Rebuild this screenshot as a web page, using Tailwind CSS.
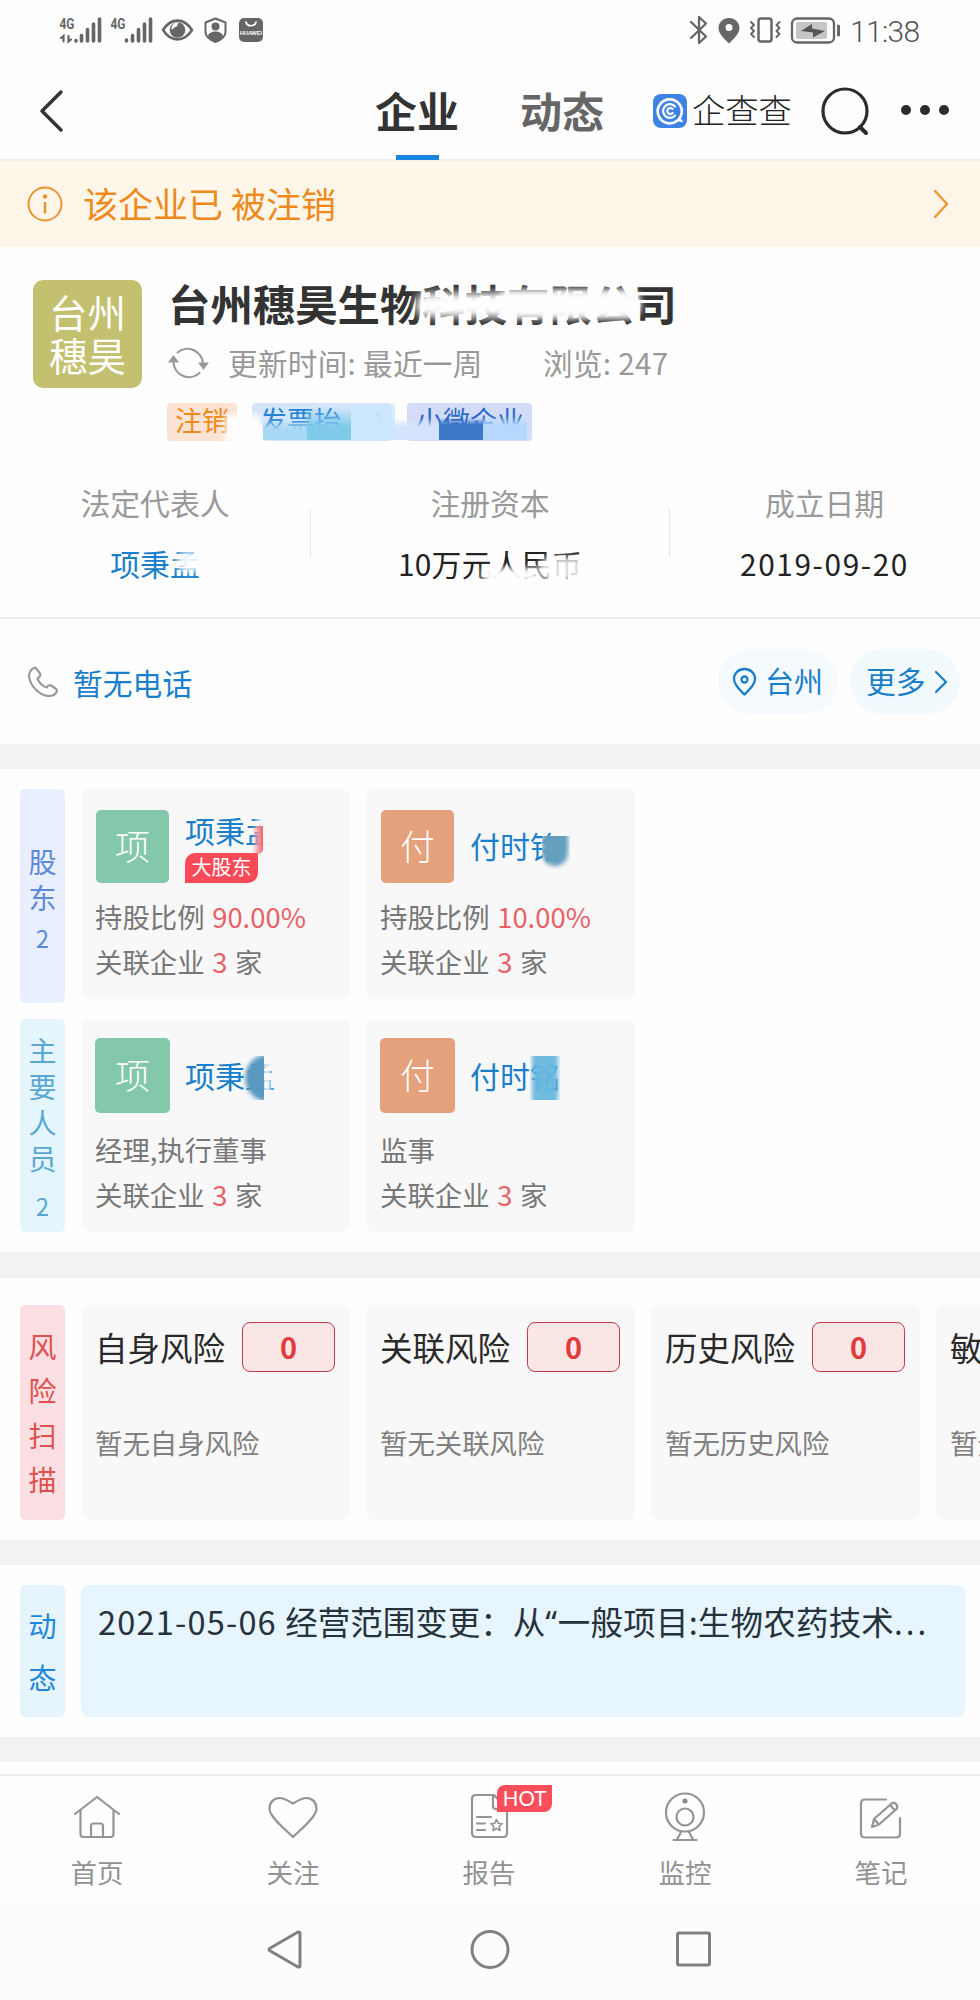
<!DOCTYPE html>
<html lang="zh-CN">
<head>
  <meta charset="UTF-8">
  <meta name="viewport" content="width=device-width, initial-scale=1.0">
  <title>企业详情</title>
  <script src="https://cdn.jsdelivr.net/npm/@tailwindcss/browser@4"></script>
</head>
<body class="bg-[#fefefe] font-['Noto_Sans_CJK_SC',sans-serif] text-[#333]">
  <div class="w-[980px] h-[2000px] overflow-hidden flex flex-col">

    <!-- 状态栏 -->
    <div class="h-[60px] shrink-0 flex items-center justify-between pl-[59px] pr-[59px] text-[#666]">
      <svg width="206" height="30" viewBox="59 15 206 30" fill="none" stroke="#666" stroke-linecap="round">
        <g font-family="Roboto, sans-serif" font-size="15" font-weight="700" fill="#666" stroke="none">
          <text x="59.5" y="28.5" textLength="15" lengthAdjust="spacingAndGlyphs">4G</text>
          <text x="110.5" y="28.5" textLength="15" lengthAdjust="spacingAndGlyphs">4G</text>
        </g>
        <path stroke-width="2.200" d="M63.500 41.500V36l-2.500 2M68.500 36v5.500l2.500-2"/>
        <path stroke-width="3.600" d="M76 40.500v.5M81.500 35.500v5.500M87.500 29.500V41M93.500 24V41M99.500 19V41M126.500 40v1M132.500 35.500v5.500M138.500 29.500V41M144.500 24V41M150.500 19V41"/>
        <path stroke-width="2.600" stroke-linejoin="round" d="M163 30c8-12.500 21-12.500 29 0c-8 12.500-21 12.500-29 0z"/>
        <circle cx="177.500" cy="30" r="7.800" fill="#666" stroke="none"/>
        <path d="M179 22.500c-2 2-1 4-3.500 4.500s-2 3-4 2.500c0-5 3-7.500 7.500-7z" fill="#fefefe" stroke="none"/>
        <path stroke-width="2" stroke-linejoin="round" d="M215.500 18.500l10 4v9.500c0 5-5 8-10 10c-5-2-10-5-10-10v-9.500z"/>
        <circle cx="215.500" cy="26.500" r="4" fill="#666" stroke="none"/>
        <path d="M208 36c1-6 14-6 15 0c-1 3-5 5-7.500 6c-2.500-1-6.500-3-7.500-6z" fill="#666" stroke="none"/>
        <rect x="239" y="18" width="24" height="24" rx="5" fill="#666" stroke="none"/>
        <path stroke="#fff" stroke-width="1.700" d="M246 22c1 5 9 5 10 0"/>
        <text x="240" y="34.500" font-family="Liberation Sans, sans-serif" font-size="5.500" font-weight="700" fill="#fff" stroke="none" textLength="22">HUAWEI</text>
      </svg>
      <div class="flex items-center">
        <svg width="152" height="32" viewBox="689 14 152 32" fill="none" stroke="#666" stroke-width="2.300" stroke-linecap="round" stroke-linejoin="round">
          <path d="M691 22l15 14.500l-7 6.500V17l7 6.500L691 38"/>
          <path fill="#666" stroke="none" fill-rule="evenodd" d="M729 18c-6 0-10.500 4.500-10.500 10c0 6 6 11 10.500 15.500c4.500-4.500 10.500-9.500 10.500-15.500c0-5.500-4.500-10-10.500-10zm0 6a3.500 3.500 0 1 1 0 7a3.500 3.500 0 0 1 0-7z"/>
          <rect x="758.500" y="18.500" width="13" height="23" rx="2.500" stroke-width="2.500"/>
          <path stroke-width="1.900" d="M751 22l3 3l-3 3l3 3l-3 3l3 3M779.500 22l-3 3l3 3l-3 3l3 3l-3 3"/>
          <rect x="792" y="18.500" width="42" height="24" rx="5"/>
          <rect x="796" y="22" width="31" height="17" rx="2" fill="#c6c6c6" stroke="none"/>
          <path d="M801 31l11-7v4.500l13 2.500l-12 6.500v-5z" fill="#555" stroke="none"/>
          <path stroke-width="3" d="M838.500 26v9"/>
        </svg>
        <span class="ml-[9px] font-['Roboto'] font-light text-[30px] leading-none text-[#555] w-[71px] pt-[3px] whitespace-nowrap tracking-[-0.7px]">11:38</span>
      </div>
    </div>

    <!-- 顶部导航 -->
    <div class="h-[101px] shrink-0 flex items-center border-b-2 border-[#eee] relative">
      <svg class="ml-[39px] mt-[3px]" width="26" height="44" fill="none" stroke="#333" stroke-width="3.500" stroke-linecap="round" stroke-linejoin="round"><path d="M22 3L3 22L22 41"/></svg>
      <div class="ml-[310px] w-[84px] text-[42px] leading-[44px] font-bold">企业</div>
      <div class="ml-[61px] w-[85px] text-[42px] leading-[44px] font-bold text-[#666]">动态</div>
      <svg class="ml-[48px] mt-[2px]" width="34" height="34" fill="none" stroke="#fff" stroke-width="2.600" stroke-linecap="round">
        <rect width="34" height="34" rx="8" fill="#3d82e4" stroke="none"/>
        <path d="M24.500 26.500A12 12 0 1 1 28 21.500c-.6 1.600-1.400 3-2.500 4.200l3 1.300"/>
        <path d="M22 12.500a6.800 6.800 0 1 0 0 9M19.500 15a3 3 0 1 0 0 4" stroke-width="2.200"/>
      </svg>
      <div class="ml-[5px] mt-[-1px] w-[100px] text-[33.300px] leading-[36px] font-light text-[#222] whitespace-nowrap">企查查</div>
      <svg class="ml-[28px] mt-[2px]" width="52" height="52" fill="none" stroke="#2c2c2c" stroke-width="3.200" stroke-linecap="round"><circle cx="25" cy="26" r="22"/><path d="M40 42l6 6" stroke-width="4"/></svg>
      <svg class="ml-[29px] mt-[1px]" width="48" height="12" fill="#2c2c2c"><circle cx="5" cy="6" r="5"/><circle cx="24" cy="6" r="5"/><circle cx="43" cy="6" r="5"/></svg>
      <div class="absolute left-[396px] -bottom-[1px] w-[43px] h-[5px] bg-[#1985de]"></div>
    </div>

    <!-- 注销提示 -->
    <div class="h-[86px] shrink-0 bg-[#fef6e8] flex items-center pl-[27px] pr-[30px]">
      <svg width="36" height="36" fill="none" stroke="#e89433" stroke-width="2"><circle cx="18" cy="18" r="16.500"/><path d="M18 16v11.500" stroke-width="2.500"/><circle cx="18" cy="10.500" r="2.200" fill="#e89433" stroke="none"/></svg>
      <div class="ml-[20px] mt-[-3px] flex gap-[8px] text-[35px] leading-[40px] text-[#ee8a1b]"><span>该企业已</span><span>被注销</span></div>
      <svg class="ml-auto" width="18" height="30" fill="none" stroke="#ea9a3a" stroke-width="2.500" stroke-linecap="round" stroke-linejoin="round"><path d="M3 2L15 15L3 28"/></svg>
    </div>

    <!-- 企业信息 -->
    <div class="h-[216px] shrink-0 flex pl-[33px] pt-[33px]">
      <div class="w-[109px] h-[108px] rounded-[10px] bg-[#c3c070] text-white text-[38.500px] leading-[43px] pt-[10px] text-center">台州<br>穗昊</div>
      <div class="ml-[26px]">
        <div class="relative w-[520px] text-[42.400px] leading-[46px] font-bold whitespace-nowrap">
          台州穗昊生物科技有限公司
          <div class="absolute left-[248px] top-[13px] w-[222px] h-[24px] bg-[#fefefe] rounded-[10px] blur-[4px]"></div>
          <div class="absolute left-[330px] top-[10px] w-[142px] h-[27px] bg-[#fefefe]/90 rounded-[10px] blur-[3px]"></div>
        </div>
        <div class="mt-[18px] h-[38px] flex items-center text-[29.600px] leading-[38px] text-[#999] tracking-[0.3px]">
          <svg width="42" height="36" viewBox="0 0 42 36" fill="none" stroke="#999" stroke-width="2.200">
            <path d="M9 8A15.500 15.500 0 0 1 35 19M32 27.500A15.500 15.500 0 0 1 5.500 17"/>
            <path d="M30 17.500h11l-5.500 7.500zM0 17.500h11L5.500 10z" fill="#999" stroke="none"/>
          </svg>
          <span class="ml-[18px] w-[315px] whitespace-nowrap">更新时间: 最近一周</span>
          <span class="whitespace-nowrap">浏览: 247</span>
        </div>
        <div class="relative mt-[21px] -ml-px h-[38px] flex gap-[15px] text-[27px] leading-[34px]">
          <div class="w-[70px] pl-[8px] rounded-[4px] bg-[#fde4d2] text-[#ee8a1b]">注销</div>
          <div class="w-[140px] pl-[8px] rounded-[4px] bg-[#d5e6fa] text-[#2583d6] flex justify-between">发票抬<svg class="mt-[8px] mr-[8px]" width="10" height="18" fill="none" stroke="#7fb2de" stroke-width="2"><path d="M2 1l6 8l-6 8"/></svg></div>
          <div class="w-[125px] pl-[9px] rounded-[4px] bg-[#d4dcf8] text-[#2a69cc] whitespace-nowrap">小微企业</div>
          <!-- 马赛克 -->
          <div class="absolute left-[58px] top-[12px] w-[36px] h-[28px] bg-[#fefefe] blur-[3px]"></div>
          <div class="absolute left-[86px] top-[22px] w-[12px] h-[18px] bg-[#fefefe] blur-[2px]"></div>
          <div class="absolute left-[96px] top-0 flex items-end">
            <div class="w-[44px] h-[22px] mt-[15px] bg-linear-to-b from-[#a7d8f4]/0 to-[#a7d8f4] to-55%"></div>
            <div class="w-[44px] h-[33px] bg-linear-to-b from-[#80caec]/0 to-[#80caec] to-60%"></div>
            <div class="w-[44px] h-[36px] bg-linear-to-b from-[#cae7fd]/60 to-[#cae7fd] to-60%"></div>
            <div class="w-[44px] h-[22px] bg-linear-to-b from-[#d5e3fc]/0 to-[#d5e3fc] to-40%"></div>
            <div class="w-[44px] h-[22px] bg-linear-to-b from-[#3d78c7]/0 to-[#3d78c7] to-30%"></div>
            <div class="w-[44px] h-[24px] bg-linear-to-b from-[#b6d8fd]/0 to-[#b6d8fd] to-40%"></div>
          </div>
        </div>
      </div>
    </div>

    <div class="h-[156px] shrink-0 flex border-b-2 border-[#eee] text-[29.800px] leading-[40px] text-center">
      <div class="w-[310px] pt-[19px]">
        <div class="text-[#999]">法定代表人</div>
        <div class="mt-[21px] text-[#1a7fcb]"><span class="relative">项秉孟<span class="absolute right-[-2px] top-[10px] w-[26px] h-[22px] rounded-full bg-[#fefefe]/90 blur-[3px]"></span></span></div>
      </div>
      <div class="mt-[46px] w-px h-[48px] bg-[#e6e6e6]"></div>
      <div class="w-[358px] pt-[19px]">
        <div class="text-[#999]">注册资本</div>
        <div class="mt-[21px] text-[#222] tracking-[0.3px]"><span class="relative">10万元人民币<span class="absolute left-[84px] top-[27px] w-[56px] h-[14px] bg-[#fefefe] blur-[3px]"></span><span class="absolute right-[-8px] top-[16px] w-[52px] h-[24px] rounded-full bg-[#fefefe]/85 blur-[3px]"></span></span></div>
      </div>
      <div class="mt-[46px] w-px h-[48px] bg-[#e6e6e6]"></div>
      <div class="w-[309px] pt-[19px]">
        <div class="text-[#999]">成立日期</div>
        <div class="mt-[21px] text-[#222] tracking-[1.600px]">2019-09-20</div>
      </div>
    </div>

    <!-- 电话与地址 -->
    <div class="h-[125px] shrink-0 flex items-center pl-[27px] pr-[20px] text-[29.800px] leading-[36px] text-[#1a7fcb]">
      <svg width="32" height="32" fill="none" stroke="#999" stroke-width="2.200" stroke-linejoin="round"><path d="M7 2c-3 1-5 5-5 8c1 10 11 20 20 20c3 0 6-1 7.500-4c.8-1.500 0-3-1-3.500l-4.500-3c-2-1-3 0-4.500 2c-3-.5-8-5-9-9c2-1.500 4-2.500 2.500-5L9.500 3C9 2 8 1.500 7 2z"/></svg>
      <span class="ml-[14px]">暂无电话</span>
      <div class="ml-auto w-[120px] h-[65px] rounded-full bg-[#f5fafe] flex items-center pl-[14px] text-[29px]">
        <svg width="25" height="30" fill="none" stroke="#1a7fcb" stroke-width="2.300" stroke-linejoin="round"><path d="M12.500 2C6.500 2 2 6.500 2 12c0 6 6 11 10.500 15.500C17 23 23 18 23 12c0-5.500-4.500-10-10.500-10z"/><circle cx="12.500" cy="12.500" r="3"/></svg>
        <span class="ml-[8px] mt-[-3px]">台州</span>
      </div>
      <div class="ml-[12px] w-[110px] h-[65px] rounded-full bg-[#f3fafe] flex items-center pl-[16px]">
        <span class="mt-[-3px]">更多</span>
        <svg class="ml-[8px]" width="15" height="26" fill="none" stroke="#1a7fcb" stroke-width="2.300" stroke-linecap="round" stroke-linejoin="round"><path d="M2 3l10 10L2 23"/></svg>
      </div>
    </div>

    <div class="h-[25px] shrink-0 bg-[#f2f2f2]"></div>

    <!-- 股东 -->
    <div class="pt-[20px] shrink-0 flex pl-[20px] gap-[16px] text-[27.400px] leading-[36px] text-[#777] [word-spacing:1.5px]">
      <div class="w-[45px] h-[214px] rounded-[5px] bg-[#e9effe] text-[#5c8ad8] text-[28px] text-center pt-[54px]">
        股<br>东
        <div class="mt-[5px] text-[24px]">2</div>
      </div>
      <div class="w-[269px] h-[210px] rounded-[8px] bg-[#f8f8f8] pl-[14px] pt-[21px]">
        <div class="ml-px flex h-[73px]">
          <div class="w-[73px] rounded-[5px] bg-[#84c8ac] text-white text-[35px] leading-[69px] text-center font-light">项</div>
          <div class="relative ml-[16px]">
            <div class="mt-[2px] text-[30px] text-[#1a7fcb]">项秉孟</div>
            <div class="mt-[5px] w-[73px] h-[30px] rounded-tl-[10px] rounded-br-[10px] bg-[#fb4a57] text-white text-[20px] leading-[28px] text-center">大股东</div>
            <div class="absolute left-[72px] top-[-2px] w-[34px] h-[42px] bg-[#f8f8f8] blur-[3px]"></div>
            <div class="absolute left-[67px] top-[16px] w-[11px] h-[28px] bg-linear-to-r from-[#f4606a]/0 to-[#f4606a] rounded-b-[6px]"></div>
          </div>
        </div>
        <div class="mt-[15px]">持股比例 <span class="text-[#e76166]">90.00%</span></div>
        <div class="mt-[9px]">关联企业 <span class="text-[#e76166]">3</span> 家</div>
      </div>
      <div class="w-[269px] h-[210px] rounded-[8px] bg-[#f8f8f8] pl-[14px] pt-[21px]">
        <div class="ml-px flex h-[73px]">
          <div class="w-[73px] rounded-[5px] bg-[#e5a17b] text-white text-[35px] leading-[69px] text-center font-light">付</div>
          <div class="relative ml-[16px] pt-[17px] text-[30px] text-[#1a7fcb]">
            付时铭
            <div class="absolute left-[72px] top-[26px] w-[28px] h-[33px] overflow-hidden"><div class="w-[26px] h-[44px] -mt-[14px] rounded-full bg-[#659fbf] blur-[2px]"></div></div>
          </div>
        </div>
        <div class="mt-[15px]">持股比例 <span class="text-[#e76166]">10.00%</span></div>
        <div class="mt-[9px]">关联企业 <span class="text-[#e76166]">3</span> 家</div>
      </div>
    </div>

    <!-- 主要人员 -->
    <div class="pt-[16px] pb-[20px] shrink-0 flex pl-[20px] gap-[16px] text-[27.400px] leading-[36px] text-[#777] [word-spacing:1.5px]">
      <div class="w-[45px] h-[213px] rounded-[5px] bg-[#e4f5fe] text-[#5aa8d2] text-[28px] text-center pt-[13px]">
        主<br>要<br>人<br>员
        <div class="mt-[12px] text-[24px]">2</div>
      </div>
      <div class="w-[269px] h-[213px] rounded-[8px] bg-[#f8f8f8] pl-[14px] pt-[19px]">
        <div class="flex h-[75px]">
          <div class="w-[75px] rounded-[5px] bg-[#84c8ac] text-white text-[35px] leading-[71px] text-center font-light">项</div>
          <div class="relative ml-[15px] pt-[19px] text-[30px] text-[#1a7fcb]">
            项秉孟
            <div class="absolute left-[78px] top-[14px] w-[8px] h-[44px] bg-[#f8f8f8]/90 blur-[2px]"></div>
            <div class="absolute left-[57px] top-[18px] w-[22px] h-[44px] overflow-hidden">
              <div class="ml-[3px] -mt-[2px] h-[48px] w-[48px] rounded-[50%] bg-[#5a98c0] blur-[2px]"></div>
            </div>
          </div>
        </div>
        <div class="mt-[18px]">经理,执行董事</div>
        <div class="mt-[9px]">关联企业 <span class="text-[#e76166]">3</span> 家</div>
      </div>
      <div class="w-[269px] h-[213px] rounded-[8px] bg-[#f8f8f8] pl-[14px] pt-[19px]">
        <div class="flex h-[75px]">
          <div class="w-[75px] rounded-[5px] bg-[#e5a17b] text-white text-[35px] leading-[71px] text-center font-light">付</div>
          <div class="relative ml-[15px] pt-[19px] text-[30px] text-[#1a7fcb]">
            付时铭
            <div class="absolute left-[60px] top-[18px] w-[30px] h-[44px] overflow-hidden"><div class="mx-[2px] -mt-[4px] h-[52px] bg-[#67b7de]/95 blur-[2px]"></div></div>
          </div>
        </div>
        <div class="mt-[18px]">监事</div>
        <div class="mt-[9px]">关联企业 <span class="text-[#e76166]">3</span> 家</div>
      </div>
    </div>

    <div class="h-[26px] shrink-0 bg-[#f2f2f2]"></div>

    <!-- 风险扫描 -->
    <div class="pt-[27px] pb-[20px] shrink-0 flex pl-[20px] gap-[16px] text-[27.400px] leading-[36px] text-[#808080]">
      <div class="w-[45px] h-[215px] shrink-0 rounded-[5px] bg-[#fcdfe2] text-[#e0504f] text-[28px] leading-[44.400px] text-center pt-[19px]">风<br>险<br>扫<br>描</div>
      <div class="w-[269px] h-[215px] shrink-0 rounded-[8px] bg-[#f8f8f8] pl-[14px] pt-[17px]">
        <div class="flex text-[32.500px] leading-[50px] text-[#2a2a2a]">自身风险
          <div class="ml-[17px] w-[93px] h-[50px] rounded-[8px] border border-[#c23c4a] bg-[#fae7e5] text-[29px] leading-[46px] font-bold text-[#e23b3b] text-center">0</div>
        </div>
        <div class="mt-[52px]">暂无自身风险</div>
      </div>
      <div class="w-[269px] h-[215px] shrink-0 rounded-[8px] bg-[#f8f8f8] pl-[14px] pt-[17px]">
        <div class="flex text-[32.500px] leading-[50px] text-[#2a2a2a]">关联风险
          <div class="ml-[17px] w-[93px] h-[50px] rounded-[8px] border border-[#c23c4a] bg-[#fae7e5] text-[29px] leading-[46px] font-bold text-[#e23b3b] text-center">0</div>
        </div>
        <div class="mt-[52px]">暂无关联风险</div>
      </div>
      <div class="w-[269px] h-[215px] shrink-0 rounded-[8px] bg-[#f8f8f8] pl-[14px] pt-[17px]">
        <div class="flex text-[32.500px] leading-[50px] text-[#2a2a2a]">历史风险
          <div class="ml-[17px] w-[93px] h-[50px] rounded-[8px] border border-[#c23c4a] bg-[#fae7e5] text-[29px] leading-[46px] font-bold text-[#e23b3b] text-center">0</div>
        </div>
        <div class="mt-[52px]">暂无历史风险</div>
      </div>
      <div class="w-[45px] h-[215px] shrink-0 rounded-l-[8px] bg-[#f8f8f8] pl-[14px] pt-[17px] overflow-hidden whitespace-nowrap">
        <div class="text-[32.500px] leading-[50px] text-[#2a2a2a]">敏</div>
        <div class="mt-[52px]">暂无</div>
      </div>
    </div>

    <div class="h-[25px] shrink-0 bg-[#f2f2f2]"></div>

    <!-- 动态 -->
    <div class="pt-[20px] pb-[20px] shrink-0 flex pl-[20px] gap-[16px]">
      <div class="w-[45px] h-[132px] rounded-[5px] bg-[#e6f5fd] text-[#2086da] text-[28px] leading-[52px] text-center pt-[14px]">动<br>态</div>
      <div class="w-[884px] h-[132px] rounded-[8px] bg-[#e7f5fe] pl-[17px] pt-[15px] text-[32.500px] leading-[42px] text-[#26323c] whitespace-nowrap"><span class="tracking-[1.200px]">2021-05-06 </span>经营范围变更：从<span class="font-['Noto_Sans'] tracking-[0.8px]">“</span><span class="tracking-[0.2px]">一般项目:生物农药技术</span><span class="font-['Noto_Sans'] tracking-[3px]">...</span></div>
    </div>

    <div class="h-[25px] shrink-0 bg-[#f2f2f2]"></div>

    <!-- 底部菜单 -->
    <div class="mt-[12px] h-[128px] shrink-0 border-t-2 border-[#eee] -ml-px flex text-[26.500px] leading-[34px] text-[#929292]">
      <div class="w-[196px] flex flex-col items-center pt-[15px]">
        <svg width="52" height="52" fill="none" stroke="#949494" stroke-width="2.200" stroke-linejoin="round" stroke-linecap="round"><path d="M4 23L26 6l22 17M9.500 19v24q0 3 3 3h27q3 0 3-3V19M20 46V35q0-2.500 2.500-2.500h7q2.500 0 2.500 2.500v11"/></svg>
        <span class="mt-[12px]">首页</span>
      </div>
      <div class="w-[196px] flex flex-col items-center pt-[15px]">
        <svg width="52" height="52" fill="none" stroke="#949494" stroke-width="2.200" stroke-linejoin="round"><path d="M26 46C20 40 2.500 26 2.500 18C2.500 11 7 7 12.500 7C17 7 21 9.500 26 12.500C31 9.500 35 7 39.500 7C45 7 49.500 11 49.500 18C49.500 26 32 40 26 46z"/></svg>
        <span class="mt-[12px]">关注</span>
      </div>
      <div class="relative w-[196px] flex flex-col items-center pt-[15px]">
        <svg width="52" height="52" fill="none" stroke="#949494" stroke-width="2.200" stroke-linejoin="round" stroke-linecap="round"><path d="M31 4H13Q9 4 9 8v34q0 4 4 4h27q4 0 4-4V18L31 4q-1 0-1 3v8q0 3 3 3h11M14 26h14M14 32.500h8M14 39h8"/><path d="M33.500 28.500l1.700 3.700l4 .5l-3 2.800l.8 4l-3.500-2l-3.500 2l.8-4l-3-2.800l4-.5z" stroke-width="1.600"/></svg>
        <span class="mt-[12px]">报告</span>
        <div class="absolute left-[106px] top-[9px] w-[55px] h-[27px] rounded-tl-[8px] rounded-br-[8px] bg-[#fc4d5a] text-white font-['Lato'] text-[20.500px] leading-[26px] text-center">HOT</div>
      </div>
      <div class="w-[196px] flex flex-col items-center pt-[15px]">
        <svg width="52" height="52" fill="none" stroke="#949494" stroke-width="2.200" stroke-linecap="round"><circle cx="26" cy="21.500" r="19"/><circle cx="26" cy="26" r="8.500"/><circle cx="26" cy="10" r="2.500" fill="#888" stroke="none"/><path d="M22 41l-4 7.500M30 41l4 7.500M14.500 49h23"/></svg>
        <span class="mt-[12px]">监控</span>
      </div>
      <div class="w-[196px] flex flex-col items-center pt-[15px]">
        <svg width="52" height="52" fill="none" stroke="#949494" stroke-width="2.200" stroke-linejoin="round" stroke-linecap="round"><path d="M31 8.500H10q-4 0-4 4v30q0 4 4 4h31q4 0 4-4V27M17 36l2-8L36.500 12.500q2.500-1.500 4.500.5q2.500 2.500.5 5L24 33.500zM19 28l5 5.500M35 14l5 5.500"/></svg>
        <span class="mt-[12px]">笔记</span>
      </div>
    </div>

    <!-- 系统导航键 -->
    <div class="flex-1 bg-[#fcfcfc] flex items-start pt-[27px] pl-[267px]">
      <svg width="38" height="42" fill="none" stroke="#808080" stroke-width="3" stroke-linejoin="round"><path d="M2.500 19.500Q1.500 20.500 2.500 21.500L31 38q2 .5 2-1.500V4.500q0-2-2-1.500z"/></svg>
      <svg class="ml-[165px]" width="40" height="42" fill="none" stroke="#808080" stroke-width="3"><circle cx="20" cy="20.500" r="18"/></svg>
      <svg class="ml-[165px]" width="38" height="42" fill="none" stroke="#808080" stroke-width="3"><rect x="2.500" y="4" width="32" height="32" rx="1.500"/></svg>
    </div>

  </div>
</body>
</html>
